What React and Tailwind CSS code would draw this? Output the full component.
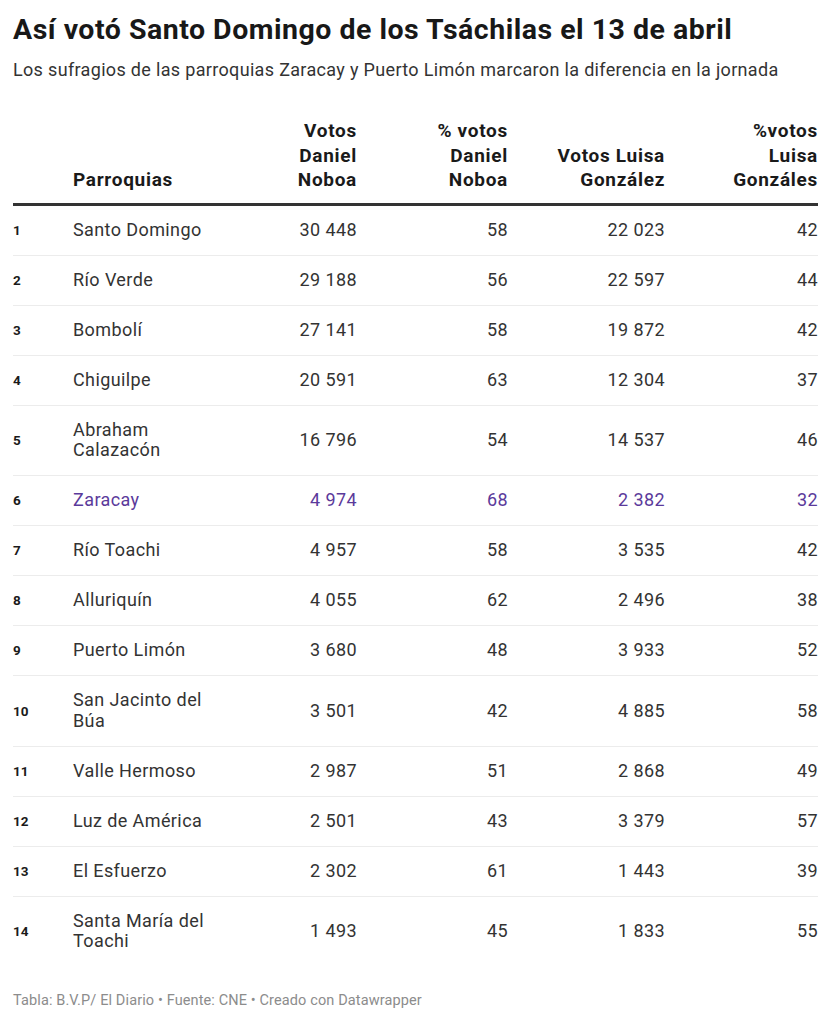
import React from "react";

const rows = [
  ["1", ["Santo Domingo"], "30 448", "58", "22 023", "42"],
  ["2", ["Río Verde"], "29 188", "56", "22 597", "44"],
  ["3", ["Bombolí"], "27 141", "58", "19 872", "42"],
  ["4", ["Chiguilpe"], "20 591", "63", "12 304", "37"],
  ["5", ["Abraham", "Calazacón"], "16 796", "54", "14 537", "46"],
  ["6", ["Zaracay"], "4 974", "68", "2 382", "32", true],
  ["7", ["Río Toachi"], "4 957", "58", "3 535", "42"],
  ["8", ["Alluriquín"], "4 055", "62", "2 496", "38"],
  ["9", ["Puerto Limón"], "3 680", "48", "3 933", "52"],
  ["10", ["San Jacinto del", "Búa"], "3 501", "42", "4 885", "58"],
  ["11", ["Valle Hermoso"], "2 987", "51", "2 868", "49"],
  ["12", ["Luz de América"], "2 501", "43", "3 379", "57"],
  ["13", ["El Esfuerzo"], "2 302", "61", "1 443", "39"],
  ["14", ["Santa María del", "Toachi"], "1 493", "45", "1 833", "55"],
];

const cols = "grid grid-cols-[60px_150px_134px_151px_157px_153px]";

export default function App() {
  return (
    <div className="w-[831px] h-[1024px] bg-white px-[13px] pt-[13px] font-['Roboto',sans-serif] text-[#333]">
      <h1 className="text-[28.5px] leading-[34px] font-bold text-[#181818] tracking-[0.5px]">
        Así votó Santo Domingo de los Tsáchilas el 13 de abril
      </h1>
      <p className="mt-[11px] text-[18px] leading-[24px] tracking-[0.33px] text-[#333]">
        Los sufragios de las parroquias Zaracay y Puerto Limón marcaron la diferencia en la jornada
      </p>
      <div className="mt-[37px] w-[805px]">
        <div className={`${cols} items-end border-b-[3px] border-[#333] pb-[10px] text-[19px] leading-[24.5px] tracking-[0.7px] font-bold text-[#1a1a1a]`}>
          <div></div>
          <div>Parroquias</div>
          <div className="text-right">Votos<br />Daniel<br />Noboa</div>
          <div className="text-right">% votos<br />Daniel<br />Noboa</div>
          <div className="text-right">Votos Luisa<br />González</div>
          <div className="text-right">%votos<br />Luisa<br />Gonzáles</div>
        </div>
        {rows.map((r, i) => {
          const hl = r[6];
          const tc = hl ? "text-[#5b3a9b]" : "text-[#333]";
          return (
            <div
              key={i}
              className={`${cols} items-center py-[14.25px] text-[18px] leading-[20.5px] tracking-[0.4px] ${i < rows.length - 1 ? "border-b border-[#ececec]" : ""}`}
            >
              <div className="text-[13.5px] font-bold tracking-normal text-[#1a1a1a]">{r[0]}</div>
              <div className={tc}>
                {r[1].map((l, j) => (
                  <div key={j}>{l}</div>
                ))}
              </div>
              <div className={`text-right ${tc}`}>{r[2]}</div>
              <div className={`text-right ${tc}`}>{r[3]}</div>
              <div className={`text-right ${tc}`}>{r[4]}</div>
              <div className={`text-right ${tc}`}>{r[5]}</div>
            </div>
          );
        })}
      </div>
      <p className="mt-[26px] text-[14.5px] leading-[18px] tracking-[0.12px] text-[#8c8c8c]">
        Tabla: B.V.P/ El Diario • Fuente: CNE • Creado con Datawrapper
      </p>
    </div>
  );
}
